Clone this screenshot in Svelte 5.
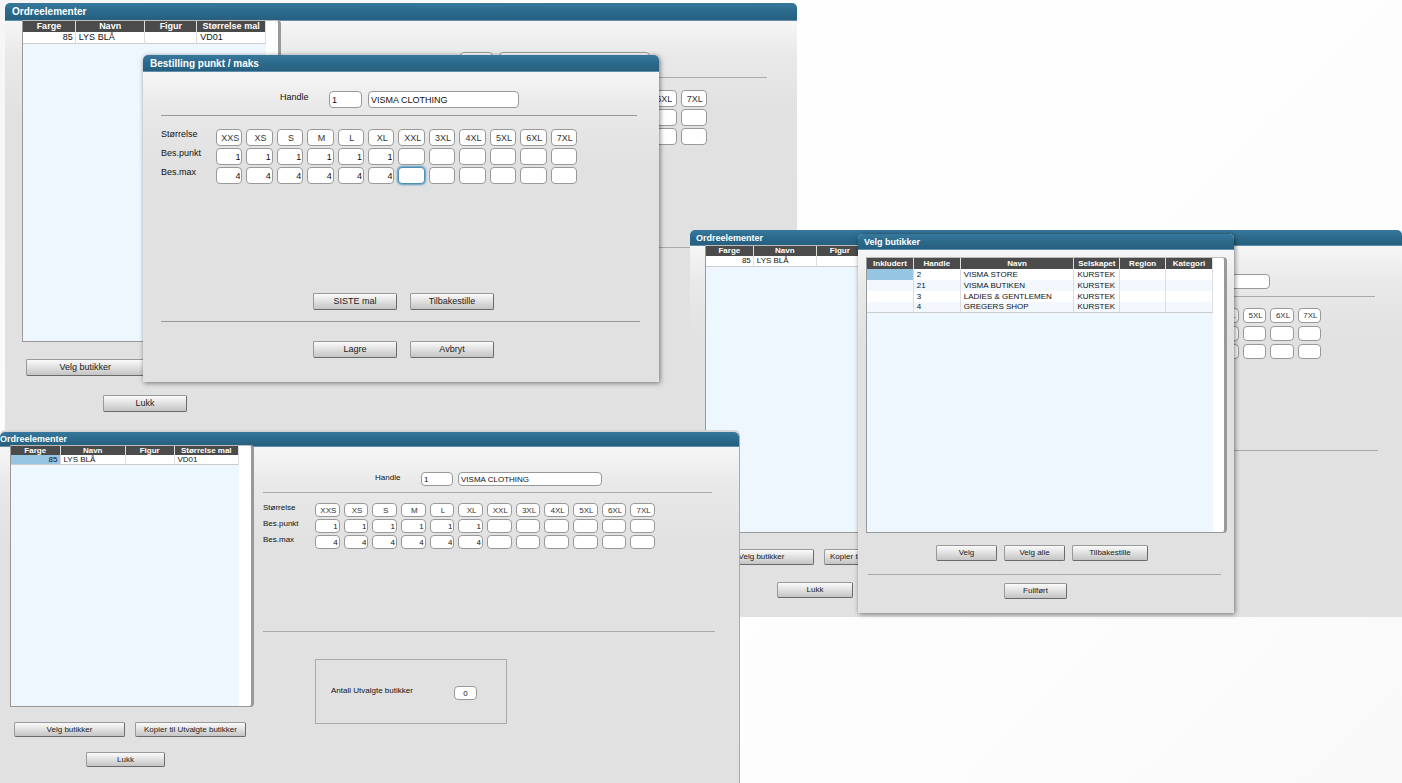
<script lang="ts">
  const sizes = ['XXS', 'XS', 'S', 'M', 'L', 'XL', 'XXL', '3XL', '4XL', '5XL', '6XL', '7XL'];

  const orderColumns = [
    { label: 'Farge', width: 53, align: 'right' },
    { label: 'Navn', width: 70 },
    { label: 'Figur', width: 52 },
    { label: 'Størrelse mal', width: 69 }
  ];
  const orderRows = [['85', 'LYS BLÅ', '', 'VD01']];

  const shopColumns = [
    { label: 'Inkludert', width: 47 },
    { label: 'Handle', width: 47 },
    { label: 'Navn', width: 114 },
    { label: 'Selskapet', width: 46 },
    { label: 'Region', width: 46 },
    { label: 'Kategori', width: 47 }
  ];
  const shopRows = [
    ['', '2', 'VISMA STORE', 'KURSTEK', '', ''],
    ['', '21', 'VISMA BUTIKEN', 'KURSTEK', '', ''],
    ['', '3', 'LADIES & GENTLEMEN', 'KURSTEK', '', ''],
    ['', '4', 'GREGERS SHOP', 'KURSTEK', '', '']
  ];

  const filled = 6;
  const shop = { number: '1', name: 'VISMA CLOTHING' };
  const empty = { number: '', name: '' };
</script>

{#snippet grid(columns, rows, selected)}
  {@const total = columns.reduce((sum, c) => sum + c.width, 0)}
  <div class="list">
    <div class="list-area">
      <table>
        <colgroup>
          {#each columns as column}
            <col style:width="{(100 * column.width) / total}%" />
          {/each}
        </colgroup>
        <thead>
          <tr>
            {#each columns as column}
              <th>{column.label}</th>
            {/each}
          </tr>
        </thead>
        <tbody>
          {#each rows as row, r}
            <tr>
              {#each row as cell, i}
                <td class:right={columns[i].align === 'right'} class:selected={selected && r === 0 && i === 0}>{cell}</td>
              {/each}
            </tr>
          {/each}
        </tbody>
      </table>
    </div>
  </div>
{/snippet}

{#snippet sizeRow(id, label, values, kind, focused)}
  <div class="size-row">
    <label for="{id}-0">{label}</label>
    <div class="cells">
      {#each values as value, i}
        <input
          id="{id}-{i}"
          class="field {kind}"
          class:focused={focused === i}
          aria-label="{label} {sizes[i]}"
          type="text"
          {value}
        />
      {/each}
    </div>
  </div>
{/snippet}

{#snippet sizeForm(id, shop, count, focused)}
  <div class="handle-row">
    <label for="{id}-handle">Handle</label>
    <input id="{id}-handle" class="field number" type="text" value={shop.number} />
    <input class="field name" type="text" aria-label="Navn" value={shop.name} />
  </div>
  <hr />
  <div class="sizes">
    {@render sizeRow(`${id}-size`, 'Størrelse', sizes, 'head', -1)}
    {@render sizeRow(`${id}-punkt`, 'Bes.punkt', sizes.map((_, i) => (i < count ? '1' : '')), 'value', -1)}
    {@render sizeRow(`${id}-max`, 'Bes.max', sizes.map((_, i) => (i < count ? '4' : '')), 'value', focused)}
  </div>
{/snippet}

{#snippet orderWindow(id, shop, count, selected)}
  <section class="window order {id}">
    <h2>Ordreelementer</h2>
    <div class="columns">
      <div class="side">
        {@render grid(orderColumns, orderRows, selected)}
        <div class="side-buttons">
          <button>Velg butikker</button>
          <button>Kopier til Utvalgte butikker</button>
        </div>
        <button class="close">Lukk</button>
      </div>
      <div class="form">
        {@render sizeForm(id, shop, count, -1)}
        <hr class="end" />
        <div class="selected-box">
          <label for="{id}-selected">Antall Utvalgte butikker</label>
          <input id="{id}-selected" class="field" type="text" value="0" />
        </div>
      </div>
    </div>
  </section>
{/snippet}

<main class="desktop">
  {@render orderWindow('first', empty, 0, false)}

  <section class="window dialog punkt">
    <h2>Bestilling punkt / maks</h2>
    <div class="form">
      {@render sizeForm('punkt', shop, filled, 6)}
      <div class="actions template">
        <button>SISTE mal</button>
        <button>Tilbakestille</button>
      </div>
      <hr class="end" />
      <div class="actions">
        <button>Lagre</button>
        <button>Avbryt</button>
      </div>
    </div>
  </section>

  {@render orderWindow('second', empty, 0, false)}

  <section class="window dialog shops">
    <h2>Velg butikker</h2>
    <div class="form">
      {@render grid(shopColumns, shopRows, true)}
      <div class="actions">
        <button>Velg</button>
        <button>Velg alle</button>
        <button class="reset">Tilbakestille</button>
      </div>
      <hr />
      <button class="done">Fullført</button>
    </div>
  </section>

  {@render orderWindow('third', shop, filled, true)}
</main>

<style>
  :global(body) {
    margin: 0;
  }

  .desktop {
    position: relative;
    min-height: 100vh;
    overflow: hidden;
    background: linear-gradient(135deg, #f5f5f5 0%, #ffffff 30%, #fdfdfd 75%, #f9f9f9 100%);
    font-family: 'Liberation Sans', Arial, sans-serif;
    color: #111;
  }

  /* windows */
  .window {
    position: absolute;
    box-sizing: border-box;
    font-size: var(--text);
    line-height: var(--line);
    border-radius: 5px 5px 0 0;
    background: linear-gradient(#f6f6f6 var(--bar), #e9e9e9 52px, #e1e1e1 110px);
  }

  .first {
    --bar: 18px;
    --title: 10px;
    --text: 9px;
    --line: 11px;
    --field: 17px;
    --button: 17px;
    --head: 11px;
    --row: 12px;
    --gap: 2px;
    --label: 57px;
    left: 5px;
    top: 3px;
    width: 792px;
    padding-bottom: 20px;
  }

  .punkt {
    --bar: 17px;
    --title: 10px;
    --text: 9px;
    --line: 11px;
    --field: 17px;
    --button: 17px;
    --gap: 2px;
    --label: 55px;
    left: 143px;
    top: 55px;
    width: 516px;
  }

  .second {
    --bar: 16px;
    --title: 9px;
    --text: 8px;
    --line: 10px;
    --field: 15px;
    --button: 16px;
    --head: 10px;
    --row: 11px;
    --gap: 3px;
    --label: 51px;
    left: 690px;
    right: 0;
    top: 230px;
    padding-bottom: 19px;
  }

  .shops {
    --bar: 16px;
    --title: 9px;
    --text: 8px;
    --line: 10px;
    --button: 16px;
    --head: 11px;
    --row: 11px;
    left: 858px;
    top: 234px;
    width: 376px;
  }

  .third {
    --bar: 15px;
    --title: 9px;
    --text: 8px;
    --line: 10px;
    --field: 14px;
    --button: 15px;
    --head: 9px;
    --row: 10px;
    --gap: 2px;
    --label: 52px;
    left: 0;
    top: 432px;
    width: 740px;
    padding-bottom: 20px;
    border-right: 1px solid #aaa;
    box-shadow: 0 -2px 0 #d6d6d6;
  }

  .dialog {
    box-shadow: 1px 1px 5px rgba(0, 0, 0, 0.5);
  }

  h2 {
    box-sizing: border-box;
    height: var(--bar);
    margin: 0;
    padding-left: 7px;
    border-bottom: 1px solid #5f90ab;
    border-radius: 5px 5px 0 0;
    background: linear-gradient(#38789d, #2b6a8b 50%, #275f7f);
    color: #fff;
    font-size: var(--title);
    font-weight: bold;
    line-height: var(--bar);
  }

  .second h2,
  .shops h2 {
    padding-left: 6px;
  }

  .third h2 {
    padding-left: 0;
  }

  .columns {
    display: flex;
  }

  .columns .form {
    flex: 1;
  }

  /* lists */
  .list {
    box-sizing: border-box;
    border: 1px solid #999;
    border-top-color: #bbb;
    border-right: 3px solid #999;
    border-radius: 0 4px 4px 0;
    background: #fff;
  }

  .list-area {
    height: 100%;
    margin-right: 12px;
    background: #eef7ff;
  }

  table {
    width: 100%;
    table-layout: fixed;
    border-collapse: separate;
    border-spacing: 0;
    background: #fff;
  }

  th,
  td {
    box-sizing: border-box;
    overflow: hidden;
    padding: 0 2px;
    border-right: 1px solid #ddd;
    white-space: nowrap;
  }

  th {
    height: var(--head);
    padding: 0;
    background: #4b4b4b;
    color: #fff;
    line-height: var(--head);
  }

  td {
    height: var(--row);
    padding-left: 3px;
    line-height: calc(var(--row) - 1px);
  }

  tbody tr:nth-child(even) {
    background: #f3f8ff;
  }

  tbody tr:last-child td {
    border-bottom: 1px solid #ccc;
  }

  .right {
    text-align: right;
  }

  .selected {
    background: #96c5e2;
  }

  /* controls */
  button {
    box-sizing: border-box;
    height: var(--button);
    padding: 0;
    border: 1px solid #999;
    border-right-color: #6a6a6a;
    border-bottom-color: #6a6a6a;
    border-radius: 2px;
    background: linear-gradient(#fafafa, #e0e0e0 50%, #c4c4c4);
    color: #222;
    font: inherit;
    white-space: nowrap;
  }

  .field {
    box-sizing: border-box;
    min-width: 0;
    width: 100%;
    height: var(--field);
    padding: 0 2px;
    border: 1px solid #999;
    border-radius: 4px;
    background: #fff;
    color: #111;
    font: inherit;
  }

  .head {
    padding: 0 0 0 2px;
    color: #333;
    text-align: center;
  }

  .value {
    padding: 0 1px;
    text-align: right;
  }

  .focused {
    border-color: #4f8fb5;
    box-shadow: 0 0 2px 1px #5b9abf;
  }

  hr {
    height: 1px;
    margin: 0;
    border: 0;
    background: #aaa;
  }

  .dialog hr {
    background: #999;
  }

  .end {
    margin-right: -3px;
  }

  .handle-row,
  .size-row {
    display: flex;
    align-items: flex-start;
  }

  .handle-row label {
    width: 49px;
    padding-top: 1px;
  }

  .number {
    width: 33px;
    margin-right: 6px;
  }

  .name {
    width: 151px;
  }

  .sizes {
    display: flex;
    flex-direction: column;
    gap: var(--gap);
    margin: 12px 60px 0 0;
  }

  .size-row label {
    width: var(--label);
  }

  .cells {
    flex: 1;
    display: grid;
    grid-template-columns: repeat(12, minmax(0, 1fr));
    gap: 4px;
  }

  .selected-box {
    box-sizing: border-box;
    display: flex;
    align-items: flex-start;
    width: 192px;
    margin: 27px 0 0 var(--label);
    padding: 26px 0 23px 15px;
    border: 1px solid #aaa;
  }

  .selected-box label {
    width: 123px;
  }

  .selected-box .field {
    width: 23px;
    text-align: center;
  }

  .side .list {
    margin-top: -1px;
  }

  .side-buttons {
    display: flex;
    gap: 10px;
    padding: 0 8px 0 4px;
  }

  .side-buttons button {
    flex: 1 1 0;
  }

  .close {
    display: block;
  }

  /* first order window */
  .first .side {
    width: 259px;
    margin: 0 8px 0 17px;
  }

  .first .list {
    height: 322px;
  }

  .first .side-buttons {
    margin: 17px 0 19px;
  }

  .first .close {
    width: 84px;
    margin-left: 81px;
  }

  .first .form {
    padding: 31px 30px 0 0;
  }

  .first .handle-row {
    padding: 0 0 8px 122px;
  }

  .first .handle-row label {
    padding-top: 3px;
  }

  .first .sizes {
    margin-bottom: 102px;
  }

  /* order point dialog */
  .punkt .form {
    padding: 19px 22px 24px 18px;
  }

  .punkt .handle-row {
    padding: 0 0 7px 119px;
  }

  .punkt .sizes {
    margin: 13px 60px 109px 0;
  }

  .punkt .actions {
    display: flex;
    gap: 13px;
    padding: 19px 0 0 152px;
  }

  .punkt .template {
    padding: 0 0 11px 152px;
  }

  .punkt button {
    width: 84px;
  }

  /* second order window */
  .second .side {
    width: 236px;
    margin: 0 5px 0 15px;
  }

  .second .list {
    height: 288px;
  }

  .second .side-buttons {
    margin: 16px 0 17px;
    padding-right: 12px;
  }

  .second .close {
    width: 76px;
    margin-left: 72px;
  }

  .second .form {
    padding: 28px 27px 0 0;
  }

  .second .handle-row {
    padding: 0 0 7px 101px;
  }

  .second .name {
    width: 135px;
  }

  .second .sizes {
    margin: 11px 54px 91px 0;
  }

  /* shop picker dialog */
  .shops .form {
    padding: 7px 7px 14px 8px;
  }

  .shops .list {
    height: 276px;
  }

  .shops .list-area {
    margin-right: 11px;
  }

  .shops .actions {
    display: flex;
    gap: 7px;
    padding: 12px 0 13px 70px;
  }

  .shops button {
    width: 61px;
  }

  .shops .reset {
    width: 76px;
  }

  .shops hr {
    margin: 0 6px 8px 2px;
    background: #aaa;
  }

  .shops .done {
    display: block;
    width: 63px;
    margin-left: 138px;
  }

  /* third order window */
  .third .side {
    width: 244px;
    margin: 0 9px 0 10px;
  }

  .third .list {
    height: 262px;
    margin-top: -2px;
  }

  .third .side-buttons {
    margin: 15px 0;
  }

  .third .close {
    width: 79px;
    margin-left: 76px;
  }

  .third .form {
    padding: 25px 27px 0 0;
  }

  .third .handle-row {
    padding: 0 0 6px 112px;
  }

  .third .handle-row label {
    width: 46px;
  }

  .third .number {
    width: 32px;
    margin-right: 5px;
  }

  .third .name {
    width: 144px;
  }

  .third .sizes {
    margin: 10px 57px 82px 0;
  }
</style>
